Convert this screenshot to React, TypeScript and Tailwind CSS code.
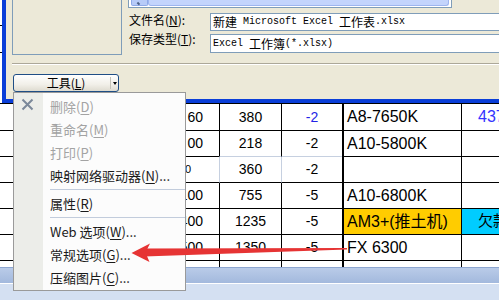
const sheetFont = "font-['Liberation_Sans','Noto_Sans_CJK_SC',sans-serif]";
const cjk = "font-['Noto_Sans_CJK_SC',sans-serif]";
const mono = "font-['Liberation_Mono',monospace]";

type Row = {
  x: string;
  xSmall?: boolean;
  b: string;
  c: string;
  cBlue?: boolean;
  d: string;
  dBg?: boolean;
  e?: string;
  eBlue?: boolean;
  eBg?: boolean;
  light?: boolean;
  lightBottom?: boolean;
  tall?: boolean;
};

const rows: Row[] = [
  { x: "60", b: "380", c: "-2", cBlue: true, d: "A8-7650K", e: "437", eBlue: true, tall: true },
  { x: "00", b: "218", c: "-2", d: "A10-5800K", lightBottom: true },
  { x: "0", xSmall: true, b: "360", c: "-2", d: "", light: true },
  { x: "100", b: "755", c: "-5", d: "A10-6800K" },
  { x: "400", b: "1235", c: "-5", d: "AM3+(推土机)", dBg: true, e: "欠款", eBg: true },
  { x: "500", b: "1350", c: "-5", d: "FX 6300" },
];

type Item = { text: string; key: string; tail?: string; disabled?: boolean; icon?: boolean } | "sep";

const items: Item[] = [
  { text: "删除", key: "D", disabled: true, icon: true },
  { text: "重命名", key: "M", disabled: true },
  { text: "打印", key: "P", disabled: true },
  { text: "映射网络驱动器", key: "N", tail: "..." },
  "sep",
  { text: "属性", key: "R" },
  "sep",
  { text: "Web 选项", key: "W", tail: "..." },
  { text: "常规选项", key: "G", tail: "..." },
  { text: "压缩图片", key: "C", tail: "..." },
];

function ToolsMenu() {
  return (
    <div className={`absolute left-[13px] top-[92px] w-[173px] h-[199px] border border-[#9A9A9A] pt-[2px] bg-[linear-gradient(90deg,#ECEDE9_29px,#FCFCFC_29px)] ${cjk} text-[13px]`}>
      {items.map((it, i) =>
        it === "sep" ? (
          <div key={i} className="h-[5px] flex items-center pl-[36px]">
            <div className="h-px w-full bg-[#C2CCDC]" />
          </div>
        ) : (
          <div key={i} className="h-[23px] flex items-center">
            <div className="w-[29px] h-full flex items-center justify-center">
              {it.icon && (
                <svg width="13" height="13" viewBox="0 0 13 13" className="-mt-[4px] -ml-[3px]">
                  <path d="M1.5 1.5 L11.5 11.5 M11.5 1.5 L1.5 11.5" stroke="#7B889A" strokeWidth="2" />
                </svg>
              )}
            </div>
            <span className={`pl-[7px] leading-none ${it.disabled ? "text-[#A3A3A3]" : "text-[#1A1A1A]"}`}>
              {it.text}(<span className="underline underline-offset-2">{it.key}</span>){it.tail}
            </span>
          </div>
        )
      )}
    </div>
  );
}

function Dialog() {
  return (
    <div className="flex h-[103px]">
      {/* sheet peeking out behind the dialog */}
      <div className="w-[2px] bg-white flex flex-col">
        <div className="h-[26px] border-b border-black" />
        <div className="h-[27px] border-b border-black" />
      </div>
      <div className="flex-1 border-l-[4px] border-b-[4px] border-[#0A3ED8] bg-[#ECE9D8] flex flex-col">
        <div className="flex h-[55px]">
          <div className="ml-[6px] w-[110px] h-[55px] border-x border-b border-[#7F9DB9]" />
          <div className="ml-[6px] flex-1 flex flex-col">
            <div className="w-[324px] h-[8px] border-x border-b border-[#7F9DB9] bg-white flex pl-[2px] pr-[2px] pb-[1px]">
              <div className="w-[17px] h-full bg-[#B7CBF8] rounded-b-[2px] border-x border-b border-[#8EA9E8] flex items-end justify-center">
                <div className="w-[5px] h-[3px] border-l-2 border-[#4D6185] -rotate-45 mb-[1px]" />
              </div>
              <div className="flex-1 h-full bg-[#C3D4FC] border-x border-b border-[#9DB5EF] rounded-b-[3px]" />
            </div>
            <div className="mt-[5px] flex items-start">
              <span className={`w-[82px] pl-[1px] mt-[1px] text-[12px] leading-[12px] text-black ${cjk}`}>
                文件名(<span className="underline">N</span>):
              </span>
              <div className="flex-1 h-[18px] border border-r-0 border-[#7F9DB9] bg-white flex items-center pl-[2px] text-black">
                <span className={`${cjk} text-[12px] leading-none`}>新建</span>
                <span className={`${mono} text-[10px] leading-none whitespace-pre`}> Microsoft Excel </span>
                <span className={`${cjk} text-[12px] leading-none`}>工作表</span>
                <span className={`${mono} text-[10px] leading-none`}>.xlsx</span>
              </div>
            </div>
            <div className="mt-[3px] flex items-start">
              <span className={`w-[82px] pl-[1px] -mt-[1px] text-[12px] leading-[12px] text-black ${cjk}`}>
                保存类型(<span className="underline">T</span>):
              </span>
              <div className="flex-1 h-[19px] border border-r-0 border-[#7F9DB9] bg-white flex items-center pl-[2px] text-black">
                <span className={`${mono} text-[10px] leading-none whitespace-pre`}>Excel </span>
                <span className={`${cjk} text-[12px] leading-none`}>工作簿</span>
                <span className={`${mono} text-[10px] leading-none`}>(*.xlsx)</span>
              </div>
            </div>
          </div>
        </div>
        <div className="ml-[6px] mt-[8px] h-[2px] border-t border-[#ACA899] border-b border-b-white" />
        <div className="ml-[7px] mt-[9px] w-[106px] h-[18px] rounded-[3px] border border-[#1F4E85] bg-[linear-gradient(#FFFFFF,#F1EFE8_60%,#DEDBD0)] flex">
          <div className={`w-[96px] flex items-center justify-center pl-[8px] text-[12px] text-black ${cjk}`}>
            工具(<span className="underline">L</span>)
          </div>
          <div className="w-px my-[2px] bg-[#C4C2B8]" />
          <div className="flex-1 flex items-center justify-center">
            <div className="w-0 h-0 border-x-[2.5px] border-x-transparent border-t-[3px] border-t-black" />
          </div>
        </div>
      </div>
    </div>
  );
}

function Sheet() {
  const line = "border-black";
  return (
    <div className={`${sheetFont} border-t border-black`}>
      {rows.map((r, i) => (
        <div key={i} className={`flex ${r.tall ? "h-[27px]" : "h-[26px]"}`}>
          <div className={`w-[219px] border-b ${line} flex items-center justify-end ${r.xSmall ? "pr-[28px] text-[11px]" : "pr-[16px] text-[14px]"} text-black`}>
            {r.x}
          </div>
          <div className={`w-[62px] border-b border-l ${r.lightBottom ? "border-b-[#C6D0E0]" : "border-b-black"} ${r.light ? "border-l-[#C6D0E0]" : "border-l-black"} flex items-center justify-center text-[14px] text-black`}>
            {r.b}
          </div>
          <div className={`w-[61px] border-b border-l ${r.lightBottom ? "border-b-[#C6D0E0]" : "border-b-black"} ${r.light ? "border-l-[#C6D0E0]" : "border-l-black"} flex items-center justify-center text-[14px] ${r.cBlue ? "text-[#2323E6]" : "text-black"}`}>
            {r.c}
          </div>
          <div className={`w-[119px] border-b border-l-2 ${line} ${r.dBg ? "bg-[#FFCC00]" : ""} flex items-center pl-[3px] text-[16px] text-black whitespace-nowrap`}>
            {r.d}
          </div>
          <div className={`flex-1 border-b border-l ${line} ${r.eBg ? "bg-[#00CCFF]" : ""} flex items-center pl-[16px] whitespace-nowrap overflow-hidden ${r.eBlue ? "text-[16px] text-[#3333FF]" : "text-[15px] text-black"}`}>
            {r.e}
          </div>
        </div>
      ))}
      <div className="flex h-[6px]">
        <div className="w-[219px]" />
        <div className="w-[62px] border-l border-black" />
        <div className="w-[61px] border-l border-black" />
        <div className="w-[119px] border-l-2 border-black" />
        <div className="flex-1 border-l border-black" />
      </div>
    </div>
  );
}

function RedArrow() {
  return (
    <svg className="absolute inset-0 pointer-events-none" width="499" height="300" viewBox="0 0 499 300">
      <polygon points="144,248.5 347,248 347,249.6 144,256.5" fill="#E63434" />
      <polygon points="131.5,253 150,243.5 145.5,252.5 149.5,262" fill="#E63434" />
    </svg>
  );
}

export default function App() {
  return (
    <div className="relative w-[499px] h-[300px] overflow-hidden bg-white">
      <Dialog />
      <Sheet />
      <div className="h-[16px] border-t border-[#8DA6D0] bg-[linear-gradient(#B9CBE8,#A3B9DD)]" />
      <div className="h-[17px] border-t border-white bg-[#D4E0F2]" />
      <ToolsMenu />
      <RedArrow />
    </div>
  );
}
